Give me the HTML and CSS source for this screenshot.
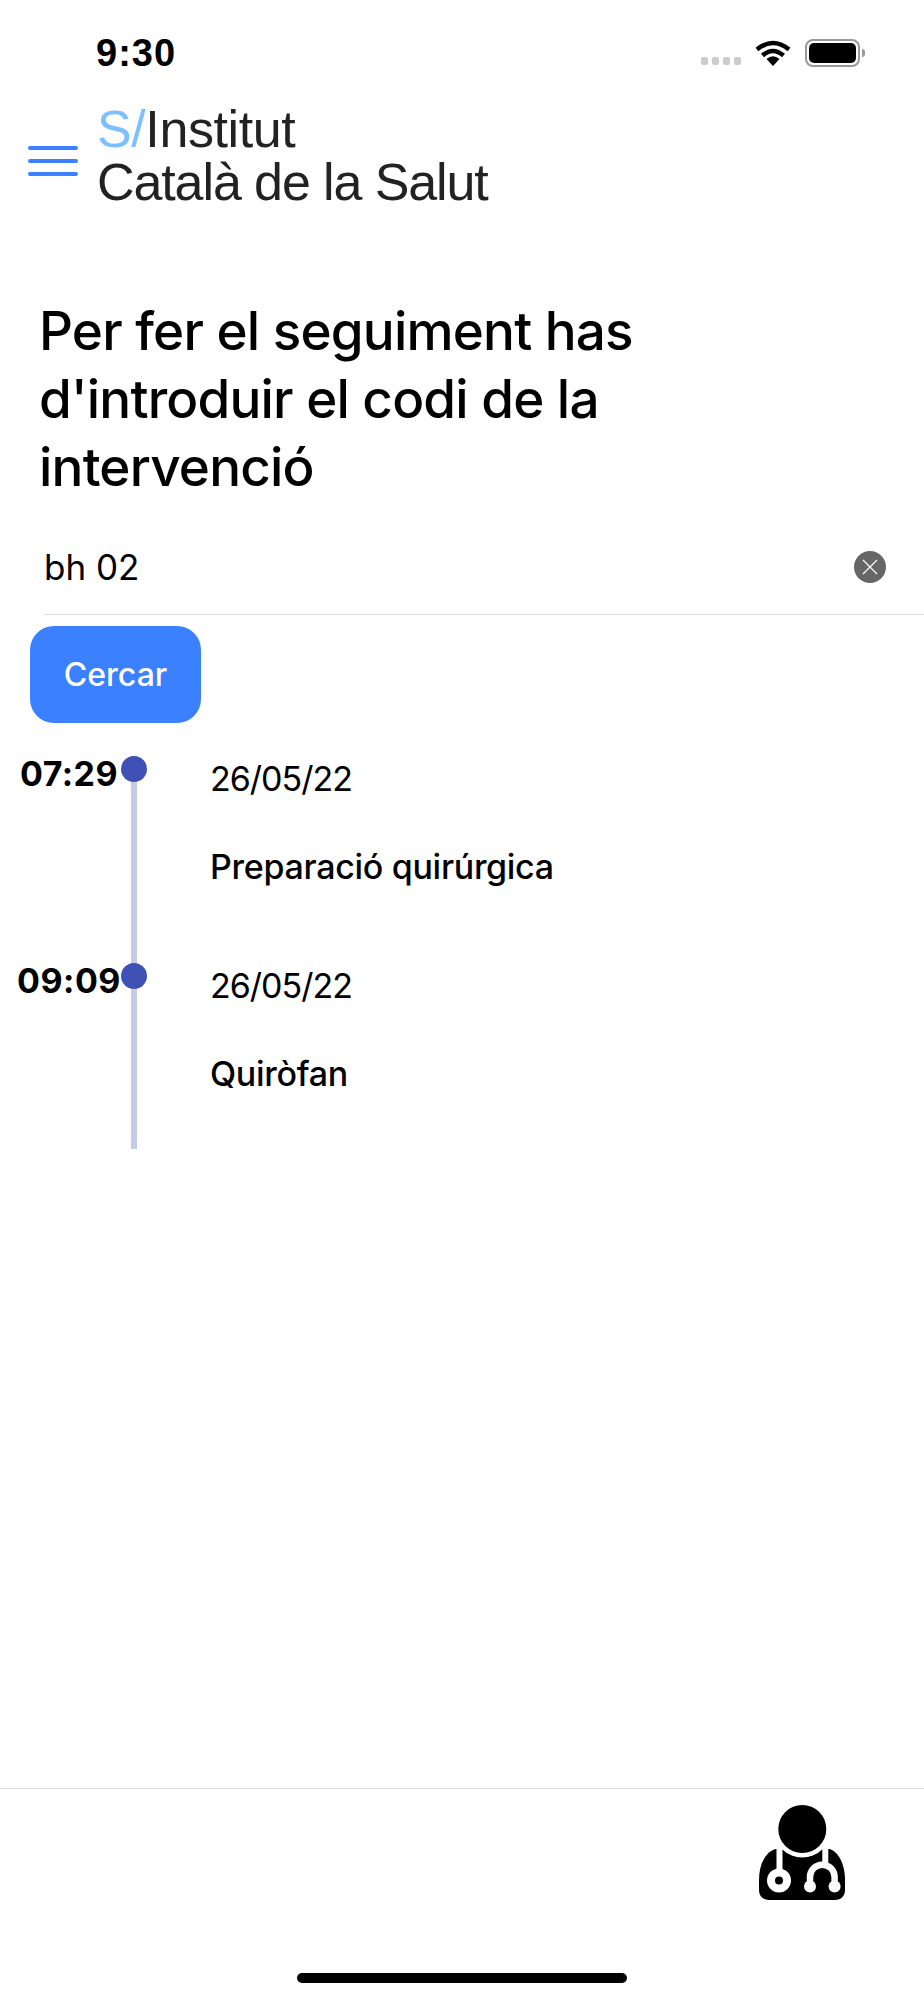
FILE: index.html
```html
<!DOCTYPE html>
<html lang="ca">
<head>
    <meta charset="UTF-8">
    <title>Seguiment</title>
    <link rel="stylesheet" href="styles.css">
</head>
<body>
    <div id="status-bar">
        <span class="clock">9:30</span>
        <div class="status-icons">
            <div class="signal"><i></i><i></i><i></i><i></i></div>
            <svg class="wifi" width="36" height="26" viewBox="0 0 36 26">
                <path d="M18 26 L11.5 19 Q18 13.5 24.5 19 Z"/>
                <path d="M7.5 15.5 Q18 6.5 28.5 15.5" fill="none" stroke="#000" stroke-width="4.5"/>
                <path d="M2 9.5 Q18 -3.5 34 9.5" fill="none" stroke="#000" stroke-width="4.5"/>
            </svg>
            <div class="battery"><div class="battery-fill"></div></div>
            <div class="battery-nub"></div>
        </div>
    </div>

    <header id="top">
        <div class="burger"><i></i><i></i><i></i></div>
        <div class="logo">
            <div class="logo-first"><span class="logo-s">S/</span>Institut</div>
            <div>Català de la Salut</div>
        </div>
    </header>

    <h1>Per fer el seguiment has d'introduir el codi de la intervenció</h1>

    <div class="search-row">
        <span class="search-value">bh 02</span>
        <svg class="clear" width="32" height="32" viewBox="0 0 32 32">
            <circle cx="16" cy="16" r="16" fill="#666"/>
            <path d="M9 9 L23 23 M23 9 L9 23" stroke="#fff" stroke-width="1.2"/>
        </svg>
    </div>
    <button class="search-btn">Cercar</button>

    <div id="timeline">
        <div class="event">
            <div class="time">07:29</div>
            <div class="rail"><span class="dot"></span></div>
            <div class="info">
                <div class="date">26/05/22</div>
                <div class="name">Preparació quirúrgica</div>
            </div>
        </div>
        <div class="event event-last">
            <div class="time">09:09</div>
            <div class="rail"><span class="dot"></span></div>
            <div class="info">
                <div class="date">26/05/22</div>
                <div class="name">Quiròfan</div>
            </div>
        </div>
    </div>

    <footer id="tabbar">
        <svg class="doctor" width="86" height="95" viewBox="0 0 86 95">
            <path d="M16.7 44 C6 47 0 60 0 75 V85 C0 91 4 95 10 95 H76 C82 95 86 91 86 85 V75 C86 60 80 47 70.7 44 Z"/>
            <circle cx="43.3" cy="24" r="28.5" fill="#fff"/>
            <circle cx="43.3" cy="24" r="24"/>
            <path d="M20.5 42 V66 M66.3 42 V60" stroke="#fff" stroke-width="6" fill="none"/>
            <circle cx="20" cy="75.5" r="12" fill="#fff"/>
            <circle cx="20" cy="75.5" r="4"/>
            <path d="M51 81.5 V72 A12.3 12.3 0 0 1 75.6 72 V81.5" stroke="#fff" stroke-width="6.5" fill="none"/>
            <circle cx="51" cy="81.5" r="6" fill="#fff"/>
            <circle cx="75.6" cy="81.5" r="6" fill="#fff"/>
        </svg>
    </footer>
    <div class="home-bar"></div>
</body>
</html>
```

FILE: styles.css
```css
body {
    margin: 0;
    width: 924px;
    height: 2000px;
    background-color: #fff;
    font-family: Inter, "Liberation Sans", sans-serif;
    color: #000;
    display: flex;
    flex-direction: column;
    overflow: hidden;
}

#status-bar {
    height: 104px;
    display: flex;
    justify-content: space-between;
    align-items: center;
    padding: 2px 59px 0 96px;
    box-sizing: border-box;
}
.clock {
    font-family: "Liberation Sans", sans-serif;
    font-weight: 700;
    font-size: 38px;
    letter-spacing: 1px;
}
.status-icons {
    display: flex;
    align-items: center;
}
.signal {
    display: flex;
    gap: 4px;
    align-self: flex-end;
    margin: 0 14px 2px 0;
}
.signal i {
    width: 7px;
    height: 8px;
    border-radius: 2px;
    background-color: #ccc;
}
.wifi {
    margin-right: 14px;
}
.battery {
    width: 55px;
    height: 28px;
    box-sizing: border-box;
    border: 2px solid #999;
    border-radius: 8px;
    padding: 2px;
}
.battery-fill {
    height: 100%;
    background-color: #000;
    border-radius: 5px;
}
.battery-nub {
    width: 3px;
    height: 8px;
    margin-left: 2px;
    background-color: #999;
    border-radius: 0 3px 3px 0;
}

#top {
    display: flex;
    align-items: center;
    height: 104px;
    padding-left: 28px;
}
.burger {
    display: flex;
    flex-direction: column;
    gap: 9px;
    width: 50px;
    margin: 9px 19px 0 0;
}
.burger i {
    height: 4px;
    border-radius: 2px;
    background-color: #3a80ff;
}
.logo {
    font-family: "Liberation Sans", sans-serif;
    font-size: 52px;
    line-height: 53px;
    letter-spacing: -1.1px;
    color: #222;
}
.logo-first {
    letter-spacing: -0.4px;
}
.logo-s {
    color: #7cc0ff;
}

h1 {
    margin: 89px 0 0 39px;
    width: 660px;
    font-size: 53px;
    line-height: 68px;
    font-weight: 500;
    letter-spacing: -0.8px;
}

.search-row {
    margin: 19px 0 0 43px;
    padding: 0 38px 0 1px;
    height: 94px;
    display: flex;
    justify-content: space-between;
    align-items: center;
    border-bottom: 1px solid #ddd;
}
.search-value {
    font-size: 35px;
}

.search-btn {
    align-self: flex-start;
    margin: 11px 0 0 30px;
    width: 171px;
    height: 97px;
    border: 0;
    border-radius: 24px;
    background-color: #3a80ff;
    color: #fff;
    font-family: Inter, sans-serif;
    font-size: 32px;
    font-weight: 450;
}

#timeline {
    margin-top: 33px;
}
.event {
    display: grid;
    grid-template-columns: 118px 32px 1fr;
    height: 207px;
}
.event-last {
    height: 186px;
}
.time {
    width: 138px;
    text-align: center;
    font-size: 34px;
    line-height: 36px;
    letter-spacing: 0.5px;
    font-weight: 700;
}
.rail {
    position: relative;
    display: flex;
    justify-content: center;
}
.rail::before {
    content: "";
    width: 6px;
    background-color: #c5cae9;
}
.dot {
    position: absolute;
    top: 0;
    left: 3px;
    width: 26px;
    height: 26px;
    border-radius: 50%;
    background-color: #3f51b5;
}
.info {
    padding-left: 60px;
    font-size: 34px;
    line-height: 42px;
}
.date {
    padding-top: 2px;
    letter-spacing: -1px;
}
.name {
    margin-top: 46px;
    font-weight: 450;
    letter-spacing: -0.3px;
}

#tabbar {
    margin-top: auto;
    height: 212px;
    box-sizing: border-box;
    border-top: 1px solid #ddd;
    padding: 16px 0 0 759px;
}
.doctor {
    display: block;
}

.home-bar {
    position: absolute;
    left: 297px;
    top: 1973px;
    width: 330px;
    height: 10px;
    border-radius: 5px;
    background-color: #000;
}
```
